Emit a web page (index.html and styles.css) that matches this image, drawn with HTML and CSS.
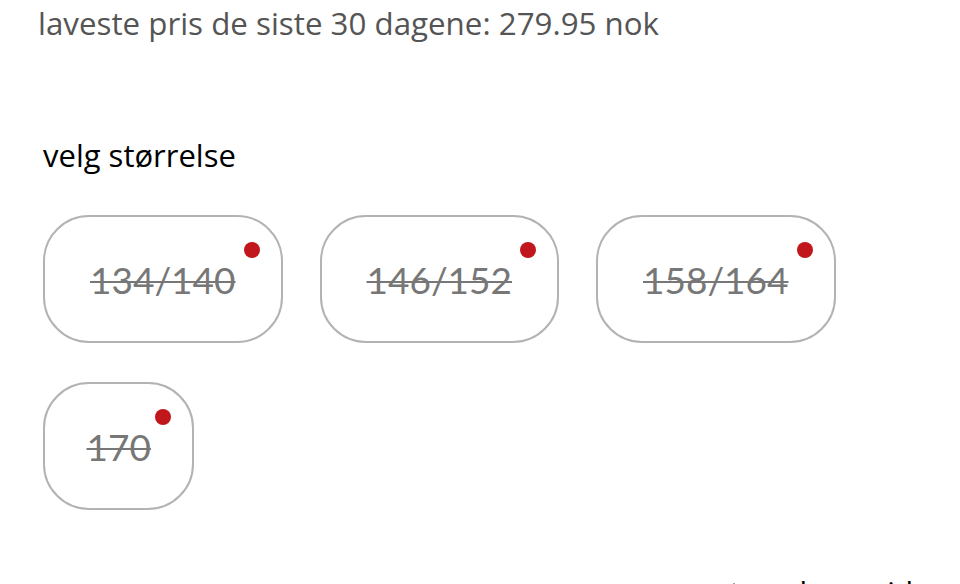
FILE: index.html
```html
<!DOCTYPE html>
<html lang="no">
<head>
<meta charset="utf-8">
<link rel="stylesheet" href="styles.css">
</head>
<body>
<div class="page">
  <p class="lowest">laveste pris de siste 30 dagene: 279.95 nok</p>
  <section class="sizes">
    <h2 class="label">velg størrelse</h2>
    <div class="pills">
      <button class="pill"><span class="num">134/140</span><span class="dot"></span></button>
      <button class="pill"><span class="num">146/152</span><span class="dot"></span></button>
      <button class="pill"><span class="num">158/164</span><span class="dot"></span></button>
      <button class="pill narrow"><span class="num">170</span><span class="dot"></span></button>
    </div>
  </section>
  <p class="guide">størrelsesguide</p>
</div>
</body>
</html>
```
FILE: styles.css
```css
html, body {
  margin: 0;
  padding: 0;
  background: #fff;
}
body {
  font-family: "Open Sans", Lato, sans-serif;
  overflow: hidden;
  height: 584px;
}
.page {
  display: flex;
  flex-direction: column;
}
.lowest {
  margin: 0;
  padding: 2px 0 0 38px;
  font-size: 31.3px;
  line-height: 42px;
  color: #555;
}
.sizes {
  padding: 90px 0 0 43px;
}
.label {
  margin: 0;
  font-weight: 400;
  font-size: 31px;
  line-height: 42px;
  color: #000;
}
.pills {
  margin-top: 39px;
  display: flex;
  flex-wrap: wrap;
  gap: 39px 37px;
  width: 880px;
}
.pill {
  position: relative;
  height: 128px;
  padding: 0 45px;
  border: 2px solid #b3b3b3;
  border-radius: 46px;
  background: #fff;
  font-family: Lato, "Open Sans", sans-serif;
  display: flex;
  align-items: center;
  justify-content: center;
}
.pill.narrow {
  padding: 0 41.5px;
}
.num {
  font-size: 37px;
  color: #777;
  text-decoration: line-through;
  text-decoration-thickness: 2px;
}
.dot {
  position: absolute;
  top: 25px;
  right: 21px;
  width: 16px;
  height: 16px;
  border-radius: 50%;
  background: #c0161c;
}
.guide {
  margin: 62px 30px 0 0;
  align-self: flex-end;
  font-size: 30px;
  line-height: 40px;
  color: #000;
}
```
